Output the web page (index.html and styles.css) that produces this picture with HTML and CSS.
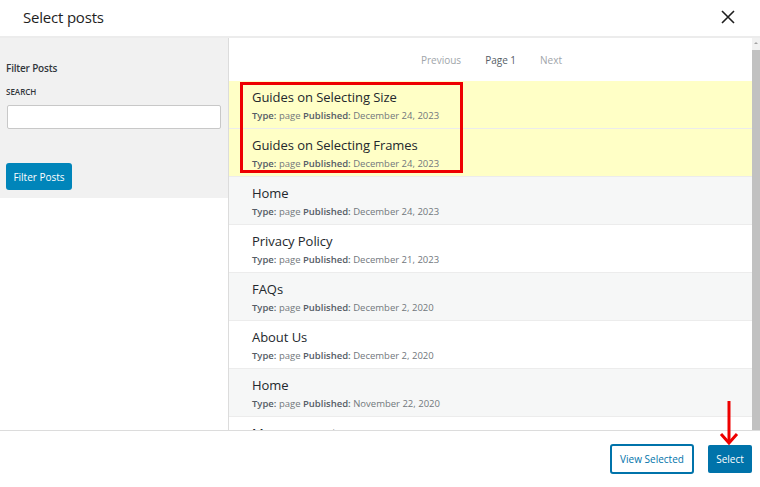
FILE: index.html
```html
<!DOCTYPE html>
<html>
<head>
<meta charset="utf-8">
<link rel="stylesheet" href="styles.css">
</head>
<body>
<div class="modal">
  <header class="header">
    <h1 class="title">Select posts</h1>
    <button class="close" aria-label="Close">
      <svg width="14" height="14" viewBox="0 0 14 14"><path d="M1 1 L13 13 M13 1 L1 13" stroke="#1e1e1e" stroke-width="1.6" fill="none"/></svg>
    </button>
  </header>
  <div class="body">
    <aside class="sidebar">
      <div class="side-heading">Filter Posts</div>
      <label class="side-label">SEARCH</label>
      <input class="side-input" type="text">
      <button class="btn-filter">Filter Posts</button>
    </aside>
    <main class="content">
      <div class="list-wrap">
        <nav class="pager">
          <span class="pager-off">Previous</span>
          <span class="pager-on">Page 1</span>
          <span class="pager-off">Next</span>
        </nav>
        <div class="list">
          <div class="row row-sel">
            <div class="row-title">Guides on Selecting Size</div>
            <div class="row-meta"><b>Type:</b> page <b>Published:</b> December 24, 2023</div>
          </div>
          <div class="row row-sel">
            <div class="row-title">Guides on Selecting Frames</div>
            <div class="row-meta"><b>Type:</b> page <b>Published:</b> December 24, 2023</div>
          </div>
          <div class="row row-alt">
            <div class="row-title">Home</div>
            <div class="row-meta"><b>Type:</b> page <b>Published:</b> December 24, 2023</div>
          </div>
          <div class="row">
            <div class="row-title">Privacy Policy</div>
            <div class="row-meta"><b>Type:</b> page <b>Published:</b> December 21, 2023</div>
          </div>
          <div class="row row-alt">
            <div class="row-title">FAQs</div>
            <div class="row-meta"><b>Type:</b> page <b>Published:</b> December 2, 2020</div>
          </div>
          <div class="row">
            <div class="row-title">About Us</div>
            <div class="row-meta"><b>Type:</b> page <b>Published:</b> December 2, 2020</div>
          </div>
          <div class="row row-alt">
            <div class="row-title">Home</div>
            <div class="row-meta"><b>Type:</b> page <b>Published:</b> November 22, 2020</div>
          </div>
          <div class="row">
            <div class="row-title">Measurements</div>
          </div>
        </div>
        <div class="highlight"></div>
      </div>
      <div class="scrollbar">
        <div class="scroll-up"></div>
        <div class="scroll-thumb"></div>
      </div>
    </main>
  </div>
  <footer class="footer">
    <button class="btn-outline">View Selected</button>
    <button class="btn-primary">Select</button>
    <svg class="arrow" width="20" height="46" viewBox="0 0 20 46">
      <path d="M10 1 L10 43" stroke="#ee0000" stroke-width="3" fill="none"/>
      <path d="M2 34 L10 43 L18 34" stroke="#ee0000" stroke-width="3" fill="none" stroke-linejoin="miter"/>
    </svg>
  </footer>
</div>
</body>
</html>
```
FILE: styles.css
```css
* { box-sizing: border-box; }
html, body { margin: 0; padding: 0; }
body {
  font-family: "Open Sans", "Noto Sans", "Liberation Sans", sans-serif;
  color: #23282d;
  background: #fff;
  width: 760px;
  height: 487px;
  overflow: hidden;
}
.modal {
  display: flex;
  flex-direction: column;
  height: 487px;
  position: relative;
}
.header {
  height: 38px;
  flex: none;
  display: flex;
  align-items: center;
  justify-content: space-between;
  padding: 0 25px 2px 23px;
  border-bottom: 2px solid #ececec;
}
.title {
  margin: 0;
  font-size: 15px;
  font-weight: 400;
  color: #1e1e1e;
  letter-spacing: -0.2px;
}
.close {
  border: 0;
  background: none;
  padding: 0;
  width: 14px;
  height: 14px;
  display: flex;
}
.body {
  flex: 1;
  display: flex;
  min-height: 0;
}
.sidebar {
  width: 228px;
  flex: none;
  align-self: flex-start;
  height: 160px;
  background: #f1f1f1;
  padding: 23px 7px 0 6px;
  display: flex;
  flex-direction: column;
  align-items: flex-start;
}
.side-heading {
  font-size: 10px;
  font-weight: 600;
  color: #32373c;
  line-height: 14px;
  letter-spacing: -0.2px;
}
.side-label {
  margin-top: 11px;
  font-size: 8px;
  font-weight: 600;
  color: #32373c;
  line-height: 12px;
}
.side-input {
  margin-top: 7px;
  margin-left: 1px;
  width: 214px;
  height: 24px;
  border: 1px solid #c8c8c8;
  border-radius: 2px;
  background: #fff;
}
.btn-filter {
  margin-top: 34px;
  width: 66px;
  height: 27px;
  border: 0;
  border-radius: 3px;
  background: #0085ba;
  color: #fff;
  font-family: inherit;
  font-size: 10px;
  padding: 0;
}
.content {
  flex: 1;
  display: flex;
  min-width: 0;
  border-left: 1px solid #dcdcdc;
  overflow: hidden;
}
.list-wrap {
  flex: 1;
  position: relative;
  overflow: hidden;
}
.pager {
  height: 43px;
  display: flex;
  justify-content: center;
  align-items: center;
  gap: 24px;
  font-size: 10px;
  padding-left: 2px;
}
.pager-off { color: #a0a5aa; }
.pager-on { color: #555d66; }
.row {
  height: 48px;
  padding: 7px 0 0 23px;
  border-bottom: 1px solid #ececec;
  background: #fff;
}
.row-alt { background: #f6f7f7; }
.row-sel { background: #ffffc6; }
.row-title {
  font-size: 13px;
  line-height: 18px;
  color: #23282d;
  letter-spacing: -0.05px;
}
.row-meta {
  margin-top: 3px;
  font-size: 9.5px;
  line-height: 13px;
  color: #72777c;
}
.row-meta b {
  font-weight: 600;
  color: #555d66;
}
.highlight {
  position: absolute;
  left: 11px;
  top: 44px;
  width: 223px;
  height: 91px;
  border: 3px solid #ee0000;
}
.scrollbar {
  width: 8px;
  flex: none;
  background: #f1f1f1;
  display: flex;
  flex-direction: column;
}
.scroll-up {
  height: 12px;
  position: relative;
}
.scroll-up::after {
  content: "";
  position: absolute;
  left: 2px;
  top: 4px;
  border-left: 2px solid transparent;
  border-right: 2px solid transparent;
  border-bottom: 2px solid #a3a3a3;
}
.scroll-thumb {
  flex: 1;
  background: #c1c1c1;
}
.footer {
  height: 57px;
  flex: none;
  border-top: 1px solid #dcdcdc;
  display: flex;
  justify-content: flex-end;
  align-items: center;
  gap: 14px;
  padding: 0 8px 0 0;
  position: relative;
}
.btn-outline {
  width: 84px;
  height: 30px;
  border: 2px solid #0073aa;
  border-radius: 3px;
  background: #fff;
  color: #0073aa;
  font-family: inherit;
  font-size: 10px;
  padding: 0;
}
.btn-primary {
  width: 44px;
  height: 28px;
  border: 0;
  border-radius: 2px;
  background: #0073aa;
  color: #fff;
  font-family: inherit;
  font-size: 10px;
  padding: 0;
}
.arrow {
  position: absolute;
  right: 21px;
  top: -31px;
}
```
